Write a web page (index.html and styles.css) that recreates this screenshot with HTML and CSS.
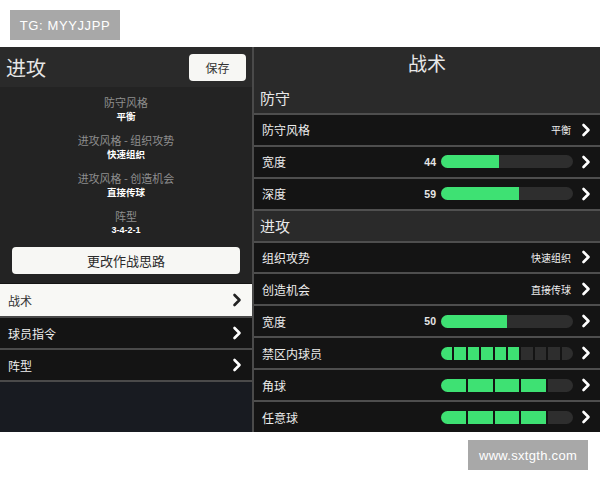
FILE: index.html
```html
<!DOCTYPE html>
<html lang="zh">
<head>
<meta charset="utf-8">
<link rel="stylesheet" href="styles.css">
</head>
<body>
<div class="tag">TG: MYYJJPP</div>
<div class="app">
  <div class="left">
    <div class="lhead">
      <span class="ltitle">进攻</span>
      <button class="save">保存</button>
    </div>
    <div class="info">
      <div class="item"><div class="lab">防守风格</div><div class="val">平衡</div></div>
      <div class="item"><div class="lab">进攻风格 - 组织攻势</div><div class="val">快速组织</div></div>
      <div class="item"><div class="lab">进攻风格 - 创造机会</div><div class="val">直接传球</div></div>
      <div class="item"><div class="lab">阵型</div><div class="val num">3-4-2-1</div></div>
      <button class="change">更改作战思路</button>
    </div>
    <div class="menu">
      <div class="mrow active"><span>战术</span><svg class="chev" viewBox="0 0 10 14"><path d="M2.5 2 L7.5 7 L2.5 12" /></svg></div>
      <div class="mrow"><span>球员指令</span><svg class="chev" viewBox="0 0 10 14"><path d="M2.5 2 L7.5 7 L2.5 12" /></svg></div>
      <div class="mrow"><span>阵型</span><svg class="chev" viewBox="0 0 10 14"><path d="M2.5 2 L7.5 7 L2.5 12" /></svg></div>
    </div>
    <div class="fill"></div>
  </div>
  <div class="right">
    <div class="rtitle">战术</div>
    <div class="sec first">防守</div>
    <div class="row"><span class="name">防守风格</span><span class="value">平衡</span><svg class="chev" viewBox="0 0 10 14"><path d="M2.5 2 L7.5 7 L2.5 12" /></svg></div>
    <div class="row"><span class="name">宽度</span><span class="n">44</span><div class="bar"><div class="bfill" style="width:44%"></div></div><svg class="chev" viewBox="0 0 10 14"><path d="M2.5 2 L7.5 7 L2.5 12" /></svg></div>
    <div class="row"><span class="name">深度</span><span class="n">59</span><div class="bar"><div class="bfill" style="width:59%"></div></div><svg class="chev" viewBox="0 0 10 14"><path d="M2.5 2 L7.5 7 L2.5 12" /></svg></div>
    <div class="sec">进攻</div>
    <div class="row"><span class="name">组织攻势</span><span class="value">快速组织</span><svg class="chev" viewBox="0 0 10 14"><path d="M2.5 2 L7.5 7 L2.5 12" /></svg></div>
    <div class="row"><span class="name">创造机会</span><span class="value">直接传球</span><svg class="chev" viewBox="0 0 10 14"><path d="M2.5 2 L7.5 7 L2.5 12" /></svg></div>
    <div class="row"><span class="name">宽度</span><span class="n">50</span><div class="bar"><div class="bfill" style="width:50%"></div></div><svg class="chev" viewBox="0 0 10 14"><path d="M2.5 2 L7.5 7 L2.5 12" /></svg></div>
    <div class="row"><span class="name">禁区内球员</span>
      <div class="seg"><i class="on"></i><i class="on"></i><i class="on"></i><i class="on"></i><i class="on"></i><i class="on"></i><i></i><i></i><i></i><i></i></div>
      <svg class="chev" viewBox="0 0 10 14"><path d="M2.5 2 L7.5 7 L2.5 12" /></svg></div>
    <div class="row"><span class="name">角球</span>
      <div class="seg"><i class="on"></i><i class="on"></i><i class="on"></i><i class="on"></i><i></i></div>
      <svg class="chev" viewBox="0 0 10 14"><path d="M2.5 2 L7.5 7 L2.5 12" /></svg></div>
    <div class="row"><span class="name">任意球</span>
      <div class="seg"><i class="on"></i><i class="on"></i><i class="on"></i><i class="on"></i><i></i></div>
      <svg class="chev" viewBox="0 0 10 14"><path d="M2.5 2 L7.5 7 L2.5 12" /></svg></div>
  </div>
</div>
<div class="foot"><div class="wm">www.sxtgth.com</div></div>
</body>
</html>
```
FILE: styles.css
```css
* { box-sizing: border-box; }
html, body { margin: 0; padding: 0; }
body {
  width: 600px;
  height: 480px;
  background: #ffffff;
  font-family: "Liberation Sans", "Noto Sans CJK SC", sans-serif;
  overflow: hidden;
}
.tag {
  margin: 10px 0 0 10px;
  width: 110px;
  height: 30px;
  background: #a8a8a8;
  color: #ffffff;
  font-family: "Liberation Sans", sans-serif;
  font-size: 13px;
  letter-spacing: 0.6px;
  display: flex;
  align-items: center;
  justify-content: center;
}
.app {
  margin-top: 7px;
  height: 385px;
  display: flex;
  background: #141414;
}
.left {
  width: 254px;
  border-right: 2px solid #4a4a4a;
  display: flex;
  flex-direction: column;
}
.lhead {
  height: 40px;
  background: #2a2a2a;
  display: flex;
  align-items: center;
  justify-content: space-between;
  padding: 0 6px 0 6px;
}
.ltitle {
  color: #e6e6e6;
  font-size: 20px;
  font-family: "Noto Sans CJK SC", sans-serif;
}
.save {
  width: 57px;
  height: 27px;
  border: none;
  border-radius: 4px;
  background: #f7f7f4;
  color: #333;
  font-family: "Noto Sans CJK SC", sans-serif;
  font-size: 12px;
  padding: 0;
}
.info {
  background: #232323;
  height: 196px;
  display: flex;
  flex-direction: column;
  align-items: center;
  padding-top: 8px;
}
.item {
  display: flex;
  flex-direction: column;
  align-items: center;
  height: 38px;
}
.lab {
  color: #8e8e8e;
  font-family: "Noto Sans CJK SC", sans-serif;
  font-size: 11px;
  line-height: 15px;
}
.val {
  color: #ffffff;
  font-family: "Noto Sans CJK SC", sans-serif;
  font-size: 9.5px;
  font-weight: 700;
  line-height: 12px;
}
.val.num { font-family: "Liberation Sans", sans-serif; font-size: 9px; }
.change {
  width: 228px;
  height: 27px;
  border: none;
  border-radius: 4px;
  background: #f7f7f4;
  color: #2a2a2a;
  font-family: "Noto Sans CJK SC", sans-serif;
  font-size: 13px;
  padding: 0;
}
.menu { display: flex; flex-direction: column; }
.mrow {
  height: 32px;
  border-top: 2px solid #4a4a4a;
  background: #141414;
  color: #f0f0f0;
  font-family: "Noto Sans CJK SC", sans-serif;
  font-size: 12px;
  display: flex;
  align-items: center;
  justify-content: space-between;
  padding: 0 10px 0 8px;
}
.mrow.active {
  background: #f8f8f5;
  color: #333;
  border-top: 1px solid #141414;
  height: 33px;
}
.mrow.active .chev path { stroke: #222; }
.fill {
  flex: 1;
  background: #181b21;
  border-top: 2px solid #4a4a4a;
}
.chev { width: 10px; height: 14px; flex: none; }
.chev path { fill: none; stroke: #ffffff; stroke-width: 2.6; stroke-linecap: round; stroke-linejoin: round; }
.right {
  flex: 1;
  display: flex;
  flex-direction: column;
  background: #141414;
}
.rtitle {
  height: 40px;
  background: #2a2a2a;
  color: #e8e8e8;
  font-family: "Noto Sans CJK SC", sans-serif;
  font-size: 19px;
  display: flex;
  align-items: center;
  justify-content: center;
  padding-bottom: 8px;
}
.sec {
  height: 32px;
  background: #2a2a2a;
  border-top: 2px solid #505050;
  color: #e8e8e8;
  font-family: "Noto Sans CJK SC", sans-serif;
  font-size: 15px;
  display: flex;
  align-items: center;
  padding-left: 6px;
}
.sec.first { height: 26px; border-top: none; padding-bottom: 4px; }
.row {
  height: 32px;
  border-top: 2px solid #4e4e4e;
  display: flex;
  align-items: center;
  padding: 0 9px 0 8px;
  color: #ececec;
  font-family: "Noto Sans CJK SC", sans-serif;
  font-size: 12px;
}
.name { flex: 1; }
.value { font-size: 10px; margin-right: 10px; color: #f0f0f0; }
.n {
  font-family: "Liberation Sans", sans-serif;
  font-weight: 700;
  font-size: 10.5px;
  color: #e6e6e6;
  margin-right: 5px;
}
.bar {
  width: 132px;
  height: 13px;
  border-radius: 7px;
  background: #2e2e2e;
  overflow: hidden;
  margin-right: 8px;
}
.bfill { height: 100%; background: #3ee173; }
.seg {
  width: 132px;
  height: 13px;
  border-radius: 7px;
  overflow: hidden;
  display: flex;
  gap: 2px;
  margin-right: 8px;
}
.seg i { flex: 1; background: #2e2e2e; }
.seg i.on { background: #3ee173; }
.foot {
  display: flex;
  justify-content: flex-end;
  padding: 8px 12px 0 0;
}
.wm {
  width: 120px;
  height: 30px;
  background: #a8a8a8;
  color: #ffffff;
  font-family: "Liberation Sans", sans-serif;
  font-size: 13px;
  letter-spacing: 0.3px;
  display: flex;
  align-items: center;
  justify-content: center;
}
```
